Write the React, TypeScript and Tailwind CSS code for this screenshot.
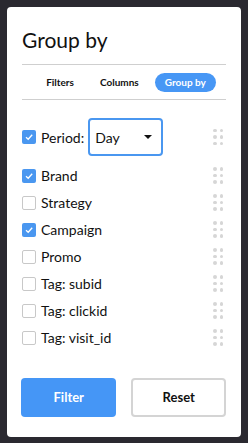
import React from "react";

const Check = ({ checked }: { checked: boolean }) =>
  checked ? (
    <div className="w-[14px] h-[14px] rounded-[2px] bg-[#4a97f0] flex items-center justify-center shrink-0">
      <svg width="10" height="10" viewBox="0 0 10 10">
        <path d="M2 5.2 L4.2 7.3 L8.2 2.8" fill="none" stroke="white" strokeWidth="1.3" />
      </svg>
    </div>
  ) : (
    <div className="w-[14px] h-[14px] rounded-[2px] border border-[#c8c8c8] bg-white shrink-0" />
  );

const Handle = () => (
  <div className="grid grid-cols-2 gap-x-[3px] gap-y-[3px] mr-[3px]">
    {[0, 1, 2, 3, 4, 5].map((i) => (
      <div key={i} className="w-[3.5px] h-[3.5px] rounded-full bg-[#d6d6d6]" />
    ))}
  </div>
);

const rows: [string, boolean][] = [
  ["Brand", true],
  ["Strategy", false],
  ["Campaign", true],
  ["Promo", false],
  ["Tag: subid", false],
  ["Tag: clickid", false],
  ["Tag: visit_id", false],
];

export default function App() {
  return (
    <div
      className="w-[248px] h-[443px] bg-[#2a2930] p-[7px]"
      style={{ fontFamily: "Lato, 'Noto Sans', sans-serif" }}
    >
      <div className="bg-white rounded-[4px] h-[430px] flex flex-col px-[15px]">
        <div className="pt-[20px] text-[21px] leading-[26px] text-[#111]">Group by</div>
        <div className="mt-[11px] border-t border-[#cfcfcf]" />
        <div className="h-[34px] flex items-center justify-center gap-[6px] pl-[4px] text-[10px] font-bold text-[#111]">
          <div className="px-[10px]">Filters</div>
          <div className="px-[10px]">Columns</div>
          <div className="px-[10px] h-[19px] flex items-center rounded-full bg-[#4797f5] text-white">Group by</div>
        </div>
        <div className="border-t border-[#cfcfcf]" />
        <div className="mt-[18px] h-[38px] flex items-center">
          <Check checked={true} />
          <span className="ml-[5px] text-[14px] text-[#111]">Period:</span>
          <div className="ml-[4px] w-[75px] h-[38px] border-2 border-[#4a97f0] rounded-[4px] flex items-center justify-between pl-[5px] pr-[9px]">
            <span className="text-[14px] text-[#111]">Day</span>
            <svg width="8" height="4" viewBox="0 0 8 4">
              <path d="M0 0 L8 0 L4 4 Z" fill="#111" />
            </svg>
          </div>
          <div className="ml-auto">
            <Handle />
          </div>
        </div>
        <div className="mt-[6px] flex flex-col">
          {rows.map(([label, c]) => (
            <div key={label} className="h-[27px] flex items-center">
              <Check checked={c} />
              <span className="ml-[5px] text-[14px] text-[#111]">{label}</span>
              <div className="ml-auto">
                <Handle />
              </div>
            </div>
          ))}
        </div>
        <div className="mt-auto mb-[20px] flex gap-[15px] -ml-[1px]">
          <button className="w-[96px] h-[39px] rounded-[4px] bg-[#4596f6] text-white text-[13px] font-bold">
            Filter
          </button>
          <button className="w-[95px] h-[39px] rounded-[4px] border-2 border-[#d4d4d4] bg-white text-[#111] text-[13px] font-bold">
            Reset
          </button>
        </div>
      </div>
    </div>
  );
}
